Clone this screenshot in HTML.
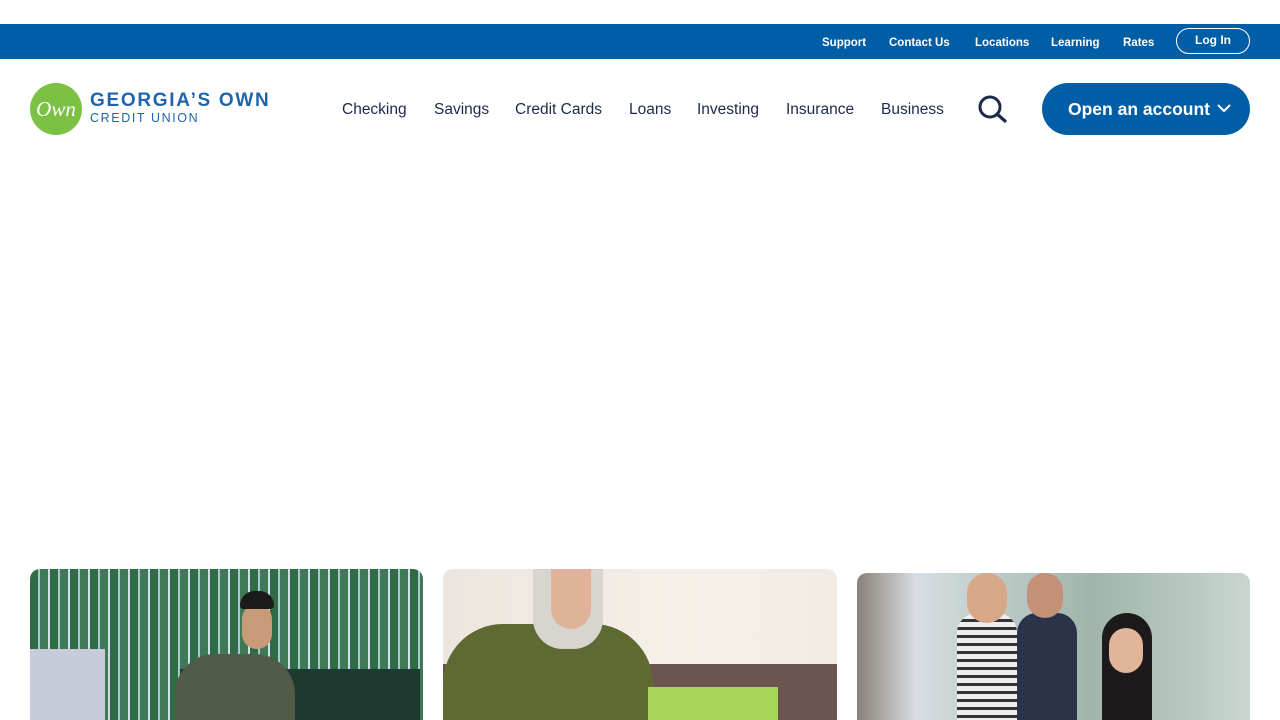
<!DOCTYPE html>
<html><head><meta charset="utf-8"><style>
*{margin:0;padding:0;box-sizing:border-box}
body{width:1280px;height:720px;overflow:hidden;background:#fff;font-family:"Liberation Sans",sans-serif;position:relative}
.top{position:absolute;top:24px;left:0;width:1280px;height:35px;background:#005ea6}
.top a{position:absolute;top:13px;color:#fff;font-size:11.5px;font-weight:bold;text-decoration:none}
.login{position:absolute;left:1176px;top:4px;width:74px;height:26px;border:1.5px solid #fff;border-radius:13px;color:#fff;font-size:12px;font-weight:bold;text-align:center;line-height:22px}
.nav a{position:absolute;top:101px;color:#1c2a4a;font-size:15.5px;text-decoration:none}
.btn{position:absolute;left:1042px;top:83px;width:208px;height:52px;border-radius:26px;background:#005ea6;color:#fff;font-size:17.5px;font-weight:bold;line-height:52px;padding-left:26px}
.card{position:absolute;border-radius:10px 10px 0 0;overflow:hidden}
</style></head><body>
<div class="top">
<a style="left:822px">Support</a><a style="left:889px">Contact Us</a><a style="left:975px">Locations</a><a style="left:1051px">Learning</a><a style="left:1123px">Rates</a>
<div class="login">Log In</div>
</div>
<div style="position:absolute;left:30px;top:83px;width:52px;height:52px;border-radius:50%;background:#7bc143;color:#fff;font-family:'Liberation Serif',serif;font-style:italic;font-size:21px;line-height:52px;text-align:center">Own</div>
<div style="position:absolute;left:90px;top:90px;color:#1f64ad;font-size:19px;letter-spacing:1.7px;font-weight:bold">GEORGIA’S OWN</div>
<div style="position:absolute;left:90px;top:111px;color:#1f64ad;font-size:12.5px;letter-spacing:1.6px">CREDIT UNION</div>
<div class="nav"><a style="left:342px">Checking</a><a style="left:434px">Savings</a><a style="left:515px">Credit Cards</a><a style="left:629px">Loans</a><a style="left:697px">Investing</a><a style="left:786px">Insurance</a><a style="left:881px">Business</a></div>
<svg style="position:absolute;left:977px;top:95px" width="32" height="28" viewBox="0 0 32 28"><circle cx="13" cy="12" r="10" fill="none" stroke="#1c2a4a" stroke-width="3"/><line x1="20" y1="19" x2="28" y2="26" stroke="#1c2a4a" stroke-width="3.2" stroke-linecap="round"/></svg>
<div class="btn">Open an account<svg style="position:absolute;left:175px;top:20px" width="14" height="10" viewBox="0 0 14 10"><path d="M1 2l6 6 6-6" fill="none" stroke="#fff" stroke-width="2"/></svg></div>
<div class="card" style="left:30px;top:569px;width:393px;height:151px;background:repeating-linear-gradient(90deg,#2f6b45 0 8px,#a8c8d8 8px 10px,#3d7a55 10px 18px,#cfe0ea 18px 20px)">
<div style="position:absolute;left:0;top:80px;width:75px;height:80px;background:#c8ccd8"></div>
<div style="position:absolute;left:150px;top:100px;width:240px;height:60px;background:#1e3a30"></div>
<div style="position:absolute;left:145px;top:85px;width:120px;height:80px;border-radius:40px 40px 0 0;background:#525a48"></div>
<div style="position:absolute;left:212px;top:35px;width:30px;height:45px;border-radius:15px;background:#c89a78"></div>
<div style="position:absolute;left:210px;top:22px;width:34px;height:18px;border-radius:17px 17px 4px 4px;background:#1a1a1a"></div>
</div>
<div class="card" style="left:443px;top:569px;width:394px;height:151px;background:linear-gradient(90deg,#ece6df,#f5efe8 60%,#f2ece4)">
<div style="position:absolute;left:0;top:95px;width:394px;height:60px;background:#6c5550"></div>
<div style="position:absolute;left:0;top:55px;width:210px;height:100px;border-radius:60px 60px 0 0;background:#5f6a32"></div>
<div style="position:absolute;left:90px;top:0;width:70px;height:80px;background:#d8d4d0;border-radius:0 0 30px 30px"></div>
<div style="position:absolute;left:108px;top:0;width:40px;height:60px;background:#e0b29a;border-radius:0 0 20px 20px"></div>
<div style="position:absolute;left:205px;top:118px;width:130px;height:40px;background:#a6d65a"></div>
</div>
<div class="card" style="left:857px;top:573px;width:393px;height:147px;background:linear-gradient(90deg,#8a8078,#d8dde2 15%,#9fb5aa 60%,#c9d6d0)">
<div style="position:absolute;left:100px;top:40px;width:60px;height:110px;background:repeating-linear-gradient(0deg,#eee 0 5px,#333 5px 8px);border-radius:20px 20px 0 0"></div>
<div style="position:absolute;left:160px;top:40px;width:60px;height:110px;background:#2a3348;border-radius:20px 20px 0 0"></div>
<div style="position:absolute;left:110px;top:0;width:40px;height:50px;background:#d6a888;border-radius:20px"></div>
<div style="position:absolute;left:170px;top:0;width:36px;height:45px;background:#c49078;border-radius:18px"></div>
<div style="position:absolute;left:245px;top:40px;width:50px;height:110px;background:#1c1a1a;border-radius:25px 25px 0 0"></div>
<div style="position:absolute;left:252px;top:55px;width:34px;height:45px;background:#e2b49a;border-radius:17px"></div>
</div>
</body></html>
